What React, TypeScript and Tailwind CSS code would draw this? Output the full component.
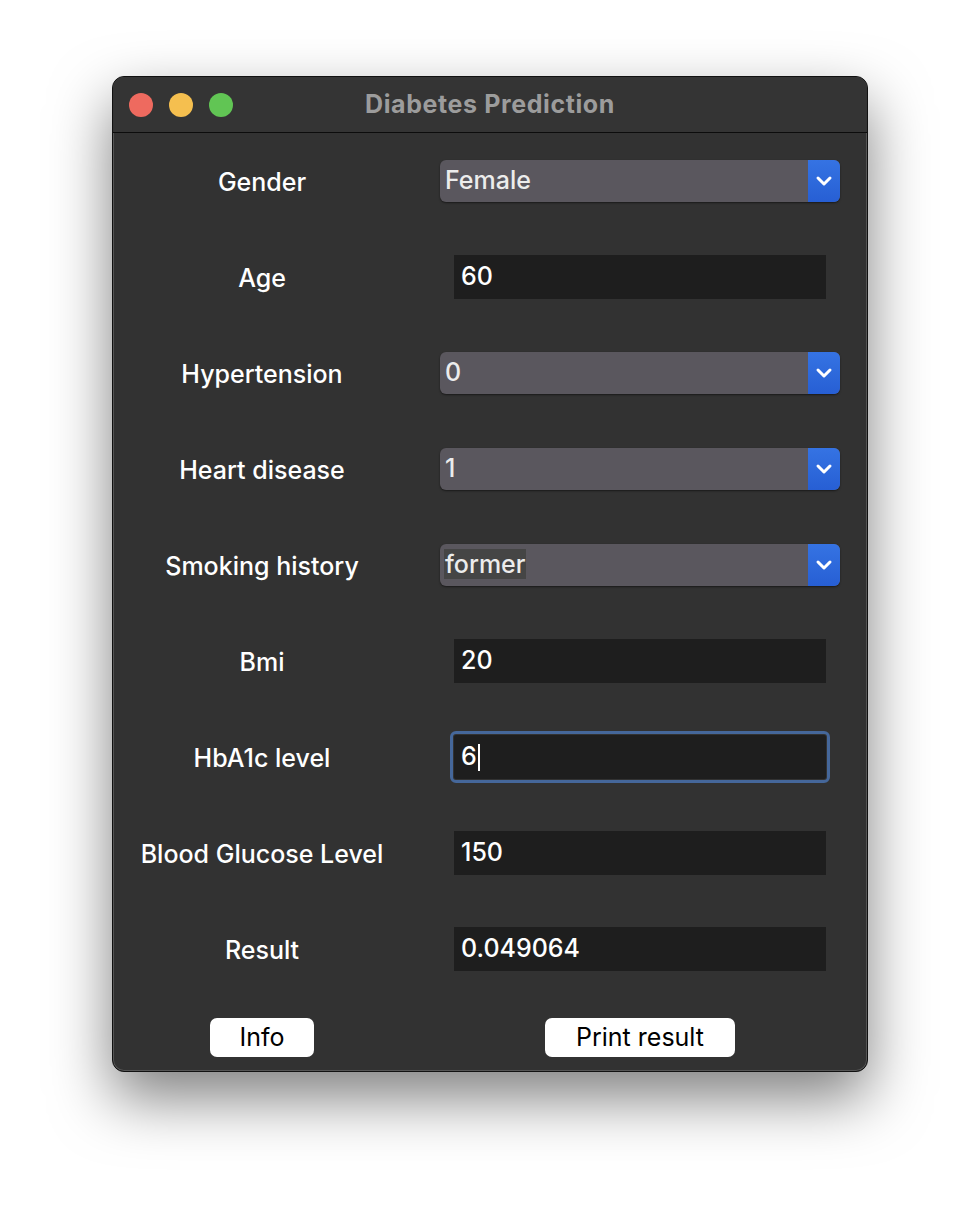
import { ChevronDown } from 'lucide-react';

type Row =
    | { label: string; kind: 'select'; value: string; highlight?: boolean }
    | { label: string; kind: 'input'; value: string; focused?: boolean };

const rows: Row[] = [
    { label: 'Gender', kind: 'select', value: 'Female' },
    { label: 'Age', kind: 'input', value: '60' },
    { label: 'Hypertension', kind: 'select', value: '0' },
    { label: 'Heart disease', kind: 'select', value: '1' },
    { label: 'Smoking history', kind: 'select', value: 'former', highlight: true },
    { label: 'Bmi', kind: 'input', value: '20' },
    { label: 'HbA1c level', kind: 'input', value: '6', focused: true },
    { label: 'Blood Glucose Level', kind: 'input', value: '150' },
    { label: 'Result', kind: 'input', value: '0.049064' },
];

function Select({ value, highlight }: { value: string; highlight?: boolean }) {
    return (
        <div className="flex h-[42px] items-center rounded-[6px] bg-[#5a575e] shadow-[0_1px_2px_rgba(0,0,0,0.5)]">
            <div className="flex-1 pl-[4px] text-[25px] text-[#ececec]">
                <span className={highlight ? 'bg-[#454545] px-[1px]' : 'px-[1px]'}>{value}</span>
            </div>
            <div className="flex h-full w-[32px] items-center justify-center rounded-r-[6px] bg-gradient-to-b from-[#3573e3] to-[#275fd4]">
                <ChevronDown className="h-[24px] w-[24px] text-white" strokeWidth={3} />
            </div>
        </div>
    );
}

function Input({ value, focused }: { value: string; focused?: boolean }) {
    return (
        <div className="px-[14px]">
            <div
                className={
                    'flex h-[44px] items-center bg-[#1e1e1e] pl-[7px] text-[25px] text-white ' +
                    (focused ? 'rounded-[2px] outline-[3px] outline-offset-[1px] outline-[#45679a]' : '')
                }
            >
                <span>{value}</span>
                {focused && <span className="ml-[1px] h-[27px] w-[2px] bg-white" />}
            </div>
        </div>
    );
}

export default function App() {
    return (
        <div
            className="flex min-h-[1220px] justify-center bg-white pt-[76px]"
            style={{ fontFamily: 'Inter, "Liberation Sans", sans-serif' }}
        >
            <div className="h-[996px] w-[756px] overflow-hidden rounded-[12px] border border-[#111] bg-[#323232] shadow-[0_26px_60px_rgba(0,0,0,0.5),inset_0_0_0_1px_#555]">
                {/* title bar */}
                <div className="relative flex h-[56px] items-center border-b border-[#0c0c0c] bg-[#343434]">
                    <div className="flex gap-[16px] pl-[16px]">
                        <span className="h-[24px] w-[24px] rounded-full bg-[#ee6a5f]" />
                        <span className="h-[24px] w-[24px] rounded-full bg-[#f5bf4f]" />
                        <span className="h-[24px] w-[24px] rounded-full bg-[#61c554]" />
                    </div>
                    <div className="absolute inset-0 flex items-center justify-center text-[25px] font-bold tracking-[0.6px] text-[#9c9c9c]">
                        Diabetes Prediction
                    </div>
                </div>

                {/* form */}
                <div className="grid grid-cols-[298px_400px] gap-x-[29px] font-medium">
                    {rows.map((r) => (
                        <div key={r.label} className="contents">
                            <div className="flex h-[96px] items-center justify-center pt-[3px] text-[25px] text-white">
                                {r.label}
                            </div>
                            <div className="flex h-[96px] flex-col justify-center">
                                {r.kind === 'select' ? (
                                    <Select value={r.value} highlight={r.highlight} />
                                ) : (
                                    <Input value={r.value} focused={r.focused} />
                                )}
                            </div>
                        </div>
                    ))}
                    <div className="flex justify-center pt-[21px]">
                        <button className="h-[39px] w-[104px] rounded-[7px] bg-white text-[25px] font-normal text-black">Info</button>
                    </div>
                    <div className="flex justify-center pt-[21px]">
                        <button className="h-[39px] w-[190px] rounded-[7px] bg-white text-[25px] font-normal text-black">Print result</button>
                    </div>
                </div>
            </div>
        </div>
    );
}
